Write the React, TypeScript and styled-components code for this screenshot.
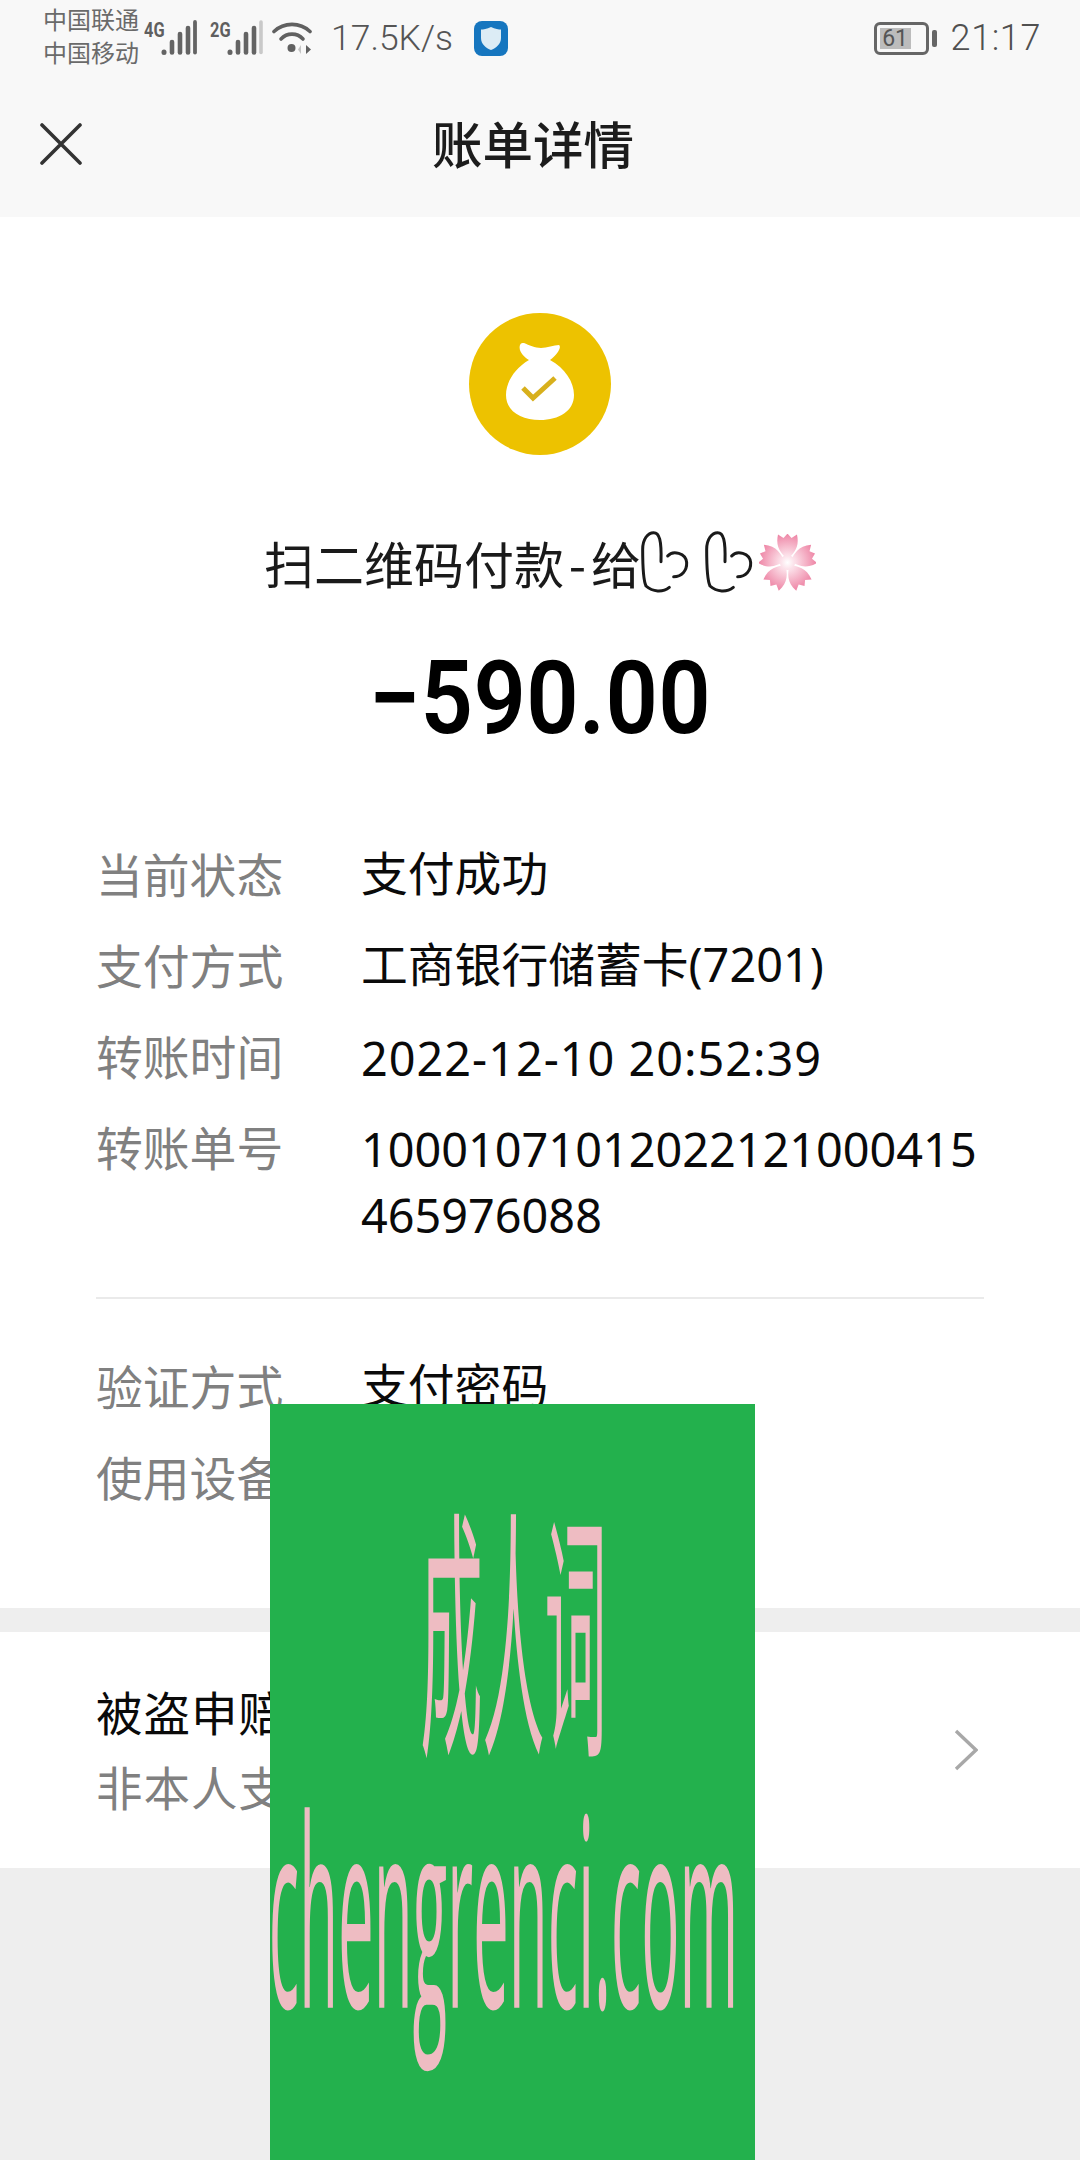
import React from "react";
import styled, { createGlobalStyle } from "styled-components";

const Global = createGlobalStyle`
  html, body { margin: 0; padding: 0; background: #eeeeee; }
  * { box-sizing: border-box; }
`;

const sans = `"Noto Sans", "Noto Sans CJK SC", sans-serif`;
const cjk = `"Noto Sans CJK SC", "Noto Sans", sans-serif`;

const Page = styled.div`
  position: relative;
  width: 1080px;
  height: 2160px;
  overflow: hidden;
  background: #eeeeee;
  font-family: ${sans};
`;

const TopArea = styled.header`
  height: 217px;
  background: #f8f8f8;
`;

const StatusBar = styled.div`
  height: 72px;
  padding: 4px 38px 0 43px;
  display: flex;
  align-items: center;
  color: #666666;
`;

const Carriers = styled.div`
  font-family: ${cjk};
  font-size: 24px;
  line-height: 33px;
  width: 101px;
  margin-bottom: 6px;
  white-space: nowrap;
  color: #6a6a6a;
`;

const SignalGroup = styled.div`
  display: flex;
  align-items: flex-start;
  width: 66px;
  height: 36px;
`;

const SignalLabel = styled.span`
  font-family: "Roboto", sans-serif;
  font-weight: 700;
  font-size: 21px;
  line-height: 20px;
  width: 18px;
  display: inline-block;
  transform: scaleX(0.78);
  transform-origin: left top;
  color: #5f5f5f;
`;

const Speed = styled.span`
  font-family: "Roboto", sans-serif;
  font-weight: 300;
  font-size: 35.5px;
  margin-left: 19px;
  width: 143px;
  white-space: nowrap;
  color: #555555;
`;

const Spacer = styled.div`
  flex: 1;
`;

const BatteryBox = styled.div`
  position: relative;
  width: 55px;
  height: 33px;
  border: 3px solid #666666;
  border-radius: 6px;
  padding: 3px;
  display: flex;
`;

const BatteryFill = styled.div`
  width: 31px;
  height: 100%;
  background: #bcbcbc;
  font-family: "Roboto", sans-serif;
  font-size: 23px;
  line-height: 22px;
  text-align: center;
  color: #555555;
`;

const BatteryNub = styled.div`
  width: 5px;
  height: 17px;
  margin-left: 3px;
  border-radius: 2px;
  background: #666666;
`;

const Clock = styled.span`
  font-family: "Roboto", sans-serif;
  font-weight: 300;
  font-size: 36px;
  margin-left: 14px;
  margin-right: 1px;
  color: #505050;
  letter-spacing: 0.6px;
`;

const NavBar = styled.div`
  position: relative;
  height: 145px;
  padding: 0 14px 5px 0;
  display: flex;
  align-items: center;
  justify-content: center;
`;

const CloseButton = styled.div`
  position: absolute;
  left: 40px;
  top: 51px;
  width: 42px;
  height: 42px;
`;

const Title = styled.h1`
  margin: 0;
  font-family: ${cjk};
  font-size: 50.5px;
  font-weight: 500;
  color: #1c1c1c;
`;

const Card = styled.section`
  background: #ffffff;
  padding: 96px 96px 96px 96px;
`;

const IconWrap = styled.div`
  display: flex;
  justify-content: center;
`;

const Merchant = styled.div`
  margin-top: 72px;
  height: 70px;
  display: flex;
  justify-content: center;
  align-items: center;
  font-family: ${cjk};
  font-size: 50px;
  line-height: 70px;
  color: #1a1a1a;
  white-space: nowrap;
`;

const Dash = styled.span`
  width: 27px;
  text-align: center;
`;

const Amount = styled.div`
  margin-top: 41px;
  font-family: "Roboto", sans-serif;
  font-weight: 600;
  font-size: 102px;
  line-height: 120px;
  letter-spacing: 0.4px;
  text-align: center;
  color: #000000;
  transform: scaleX(0.9);
`;

const Rows = styled.div<{ $top: number }>`
  display: flex;
  flex-direction: column;
  gap: 25px;
  margin-top: ${(p) => p.$top}px;
`;

const Row = styled.div`
  display: flex;
  font-size: 46.8px;
  line-height: 66px;
`;

const Label = styled.div`
  width: 265px;
  height: 66px;
  flex: none;
  line-height: 60px;
  font-family: ${cjk};
  color: #808080;
`;

const Value = styled.div<{ $lift?: boolean; $spread?: boolean }>`
  flex: 1;
  min-width: 0;
  line-height: ${(p) => (p.$lift ? "60px" : "66px")};
  min-height: 66px;
  letter-spacing: ${(p) => (p.$spread ? "1px" : "0")};
  color: #0a0a0a;
  word-break: break-all;
`;

const Divider = styled.div`
  height: 2px;
  margin-top: 49px;
  background: #eaeaea;
`;

const Claim = styled.section`
  margin-top: 24px;
  height: 236px;
  padding: 0 102px 0 96px;
  background: #ffffff;
  display: flex;
  align-items: center;
  justify-content: space-between;
`;

const ClaimText = styled.div`
  margin-bottom: 5px;
  font-family: ${cjk};
  font-size: 46.5px;
  line-height: 75px;
  letter-spacing: 1px;
`;

const ClaimTitle = styled.div`
  color: #0a0a0a;
`;

const ClaimSub = styled.div`
  color: #808080;
`;

const Watermark = styled.aside`
  position: absolute;
  left: 270px;
  top: 1404px;
  right: 325px;
  bottom: 0;
  background: #23b14d;
  color: #eebcc2;
  overflow: hidden;
`;

const MarkCjk = styled.div`
  margin-top: 96px;
  height: 245px;
  font-family: ${cjk};
  font-size: 62px;
  line-height: 245px;
  text-align: center;
  font-weight: 400;
  white-space: nowrap;
  transform: translateX(1px) scaleY(4.26);
`;

const MarkLatin = styled.div`
  margin-top: 33px;
  height: 260px;
  font-family: "Open Sans", sans-serif;
  font-size: 63.5px;
  line-height: 260px;
  text-align: center;
  white-space: nowrap;
  transform: translateX(-9px) scaleY(4.16);
`;

const Bars = ({ dim }: { dim?: boolean }) => (
  <svg width="36" height="36" viewBox="0 0 36 36" style={{ flex: "none", marginLeft: -1 }}>
    <g strokeLinecap="round" strokeWidth="4.6" stroke="#646464">
      <line x1="3" y1="32" x2="3" y2="32.5" strokeWidth="5" />
      <line x1="11" y1="22" x2="11" y2="32.5" />
      <line x1="19" y1="14" x2="19" y2="32.5" />
      <line x1="27" y1="8" x2="27" y2="32.5" stroke="#646464" />
      {dim ? (
        <line x1="34" y1="2" x2="34" y2="32.5" stroke="#c9c9c9" strokeWidth="3.6" />
      ) : (
        <line x1="34" y1="2" x2="34" y2="32.5" strokeWidth="3.8" />
      )}
    </g>
  </svg>
);

const Wifi = () => (
  <svg width="40" height="34" viewBox="0 0 40 34" fill="none" style={{ marginLeft: -4, flex: "none" }}>
    <path d="M2 10.5 C12 1 28 1 38 10.5" stroke="#606060" strokeWidth="3.6" strokeLinecap="round" />
    <path d="M9 18 C15 11.5 25 11.5 31 18" stroke="#606060" strokeWidth="3.6" strokeLinecap="round" />
    <circle cx="19.5" cy="27" r="4" fill="#606060" />
    <path d="M29 24 L29 33 L26 28.5 Z" fill="#c4c4c4" />
    <path d="M34 24 L39 28.5 L34 33 Z" fill="#606060" />
  </svg>
);

const Shield = () => (
  <svg width="34" height="35" viewBox="0 0 34 35" style={{ flex: "none" }}>
    <rect x="0" y="0" width="34" height="35" rx="8" fill="#1676bf" />
    <path d="M17 6 C21 8 25 8.5 27 8.5 L27 17 C27 23 22 27 17 29 C12 27 7 23 7 17 L7 8.5 C9 8.5 13 8 17 6 Z" fill="#dcecf5" />
  </svg>
);

const Bag = () => (
  <svg width="142" height="142" viewBox="0 0 142 142">
    <circle cx="71" cy="71" r="71" fill="#edc200" />
    <path
      d="M55 30 C60 32 66 35 72 35 C78 35 85 32 90 32 C93 34 88 42 81 47 C96 55 105 69 105 82 C105 98 90 107 71 107 C52 107 37 98 37 82 C37 69 46 55 60 47 C55 44 49 38 51 32 C52 30 53 30 55 30 Z"
      fill="#ffffff"
    />
    <path d="M54 75 L64 85 L86 65" fill="none" stroke="#d8b01c" strokeWidth="5" />
  </svg>
);

const Heart = ({ gap }: { gap: number }) => (
  <svg width="50" height="64" viewBox="0 0 150 192" fill="none" style={{ marginRight: gap, flex: "none" }}>
    <path
      d="M85 172 C65 188 35 186 15 168 C6 150 5 100 5 58 C5 28 20 8 38 8 C55 8 62 30 60 95"
      stroke="#1a1a1a"
      strokeWidth="9"
      strokeLinecap="round"
    />
    <path
      d="M80 78 C95 60 135 68 137 98 C138 122 122 140 98 140"
      stroke="#1a1a1a"
      strokeWidth="9"
      strokeLinecap="round"
    />
  </svg>
);

const Petal = "M0 -3 C-6 -9 -12.5 -15 -9.5 -28 L-4 -24.5 L0 -29 L4 -24.5 L9.5 -28 C12.5 -15 6 -9 0 -3 Z";

const Blossom = () => (
  <svg width="57" height="57" viewBox="-30 -30 60 60" style={{ flex: "none" }}>
    <defs>
      <radialGradient id="sakura" gradientUnits="userSpaceOnUse" cx="0" cy="0" r="29">
        <stop offset="0" stopColor="#ffffff" />
        <stop offset="0.3" stopColor="#fbdbe5" />
        <stop offset="1" stopColor="#ee86a6" />
      </radialGradient>
    </defs>
    {[0, 72, 144, 216, 288].map((a) => (
      <path key={a} d={Petal} transform={`rotate(${a}) scale(1.05)`} fill="url(#sakura)" />
    ))}
    <circle r="8" fill="url(#sakura)" />
  </svg>
);

export default function App() {
  return (
    <Page>
      <Global />
      <TopArea>
        <StatusBar>
          <Carriers>
            中国联通
            <br />
            中国移动
          </Carriers>
          <SignalGroup>
            <SignalLabel>4G</SignalLabel>
            <Bars />
          </SignalGroup>
          <SignalGroup>
            <SignalLabel>2G</SignalLabel>
            <Bars dim />
          </SignalGroup>
          <Wifi />
          <Speed>17.5K/s</Speed>
          <Shield />
          <Spacer />
          <BatteryBox>
            <BatteryFill>61</BatteryFill>
          </BatteryBox>
          <BatteryNub />
          <Clock>21:17</Clock>
        </StatusBar>
        <NavBar>
          <CloseButton>
            <svg width="42" height="42" viewBox="0 0 42 42">
              <path d="M2 2 L40 40 M40 2 L2 40" stroke="#333333" strokeWidth="3.6" strokeLinecap="round" />
            </svg>
          </CloseButton>
          <Title>账单详情</Title>
        </NavBar>
      </TopArea>

      <Card>
        <IconWrap>
          <Bag />
        </IconWrap>
        <Merchant>
          扫二维码付款<Dash>-</Dash>给
          <Heart gap={14} />
          <Heart gap={4} />
          <Blossom />
        </Merchant>
        <Amount>−590.00</Amount>
        <Rows $top={85}>
          <Row>
            <Label>当前状态</Label>
            <Value $lift>支付成功</Value>
          </Row>
          <Row>
            <Label>支付方式</Label>
            <Value $lift>工商银行储蓄卡(7201)</Value>
          </Row>
          <Row>
            <Label>转账时间</Label>
            <Value $spread>2022-12-10 20:52:39</Value>
          </Row>
          <Row>
            <Label>转账单号</Label>
            <Value>10001071012022121000415465976088</Value>
          </Row>
        </Rows>
        <Divider />
        <Rows $top={56}>
          <Row>
            <Label>验证方式</Label>
            <Value $lift>支付密码</Value>
          </Row>
          <Row>
            <Label>使用设备</Label>
            <Value />
          </Row>
        </Rows>
      </Card>

      <Claim>
        <ClaimText>
          <ClaimTitle>被盗申赔</ClaimTitle>
          <ClaimSub>非本人支付</ClaimSub>
        </ClaimText>
        <svg width="24" height="42" viewBox="0 0 24 42" fill="none">
          <path d="M2 2 L22 21 L2 40" stroke="#a8a8a8" strokeWidth="3.4" />
        </svg>
      </Claim>

      <Watermark>
        <MarkCjk>成人词</MarkCjk>
        <MarkLatin>chengrenci.com</MarkLatin>
      </Watermark>
    </Page>
  );
}
